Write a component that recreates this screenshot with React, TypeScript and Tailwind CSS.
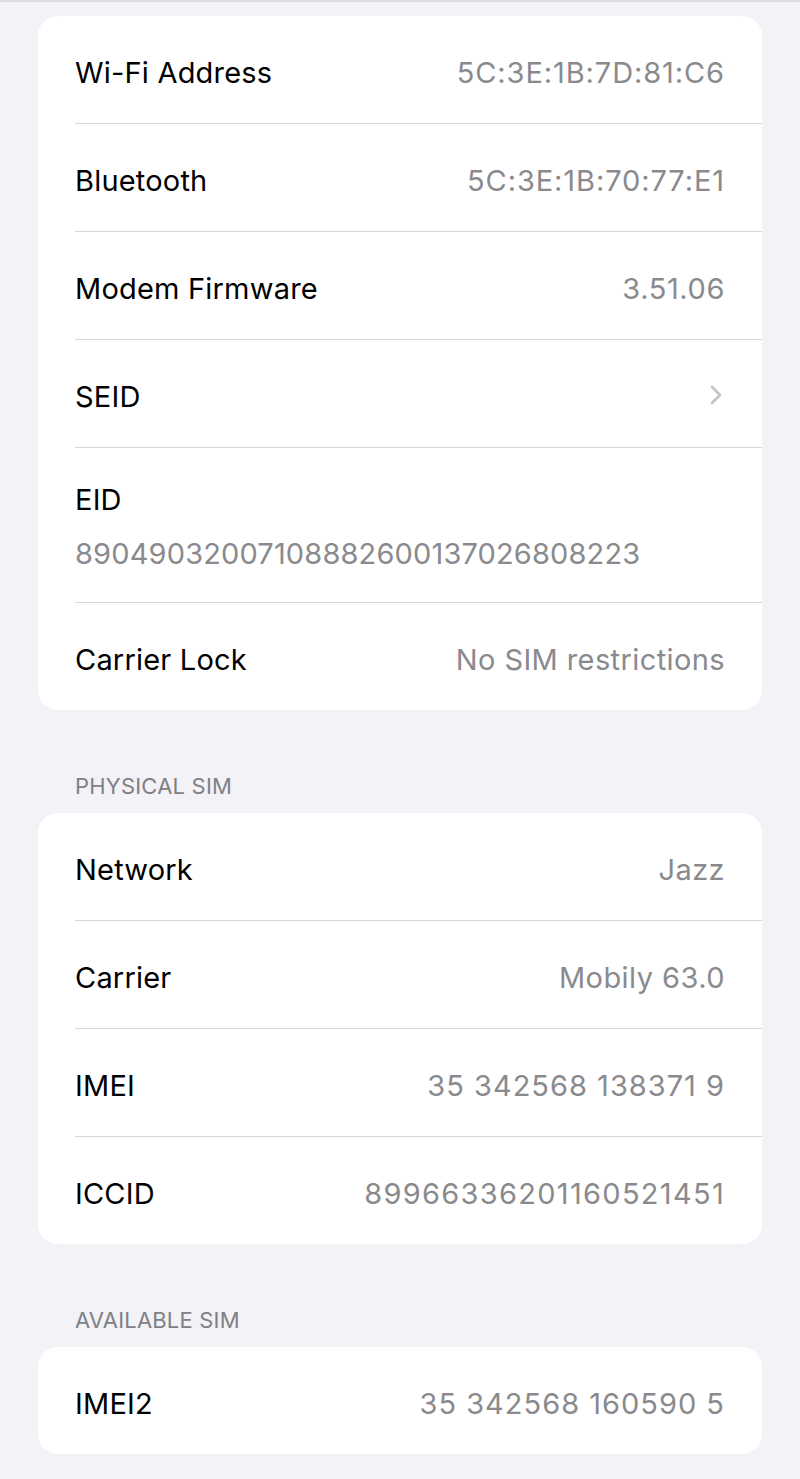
import { ChevronRight } from 'lucide-react'

type Row = {
  label: string
  value?: string
  chevron?: boolean
  stacked?: boolean
  spacing?: string
}

const general: Row[] = [
  { label: 'Wi-Fi Address', value: '5C:3E:1B:7D:81:C6', spacing: 'tracking-[0.9px]' },
  { label: 'Bluetooth', value: '5C:3E:1B:70:77:E1', spacing: 'tracking-[0.9px]' },
  { label: 'Modem Firmware', value: '3.51.06', spacing: 'tracking-[0.6px]' },
  { label: 'SEID', chevron: true },
  { label: 'EID', value: '89049032007108882600137026808223', stacked: true },
  { label: 'Carrier Lock', value: 'No SIM restrictions', spacing: 'tracking-[0.4px]' },
]

const physical: Row[] = [
  { label: 'Network', value: 'Jazz', spacing: 'tracking-[0.4px]' },
  { label: 'Carrier', value: 'Mobily 63.0', spacing: 'tracking-[0.45px]' },
  { label: 'IMEI', value: '35 342568 138371 9', spacing: 'tracking-[1px]' },
  { label: 'ICCID', value: '89966336201160521451', spacing: 'tracking-[1.3px]' },
]

const available: Row[] = [
  { label: 'IMEI2', value: '35 342568 160590 5', spacing: 'tracking-[1px]' },
]

function Card({ rows }: { rows: Row[] }) {
  return (
    <div className="mx-[38px] bg-white rounded-[20px] overflow-hidden">
      {rows.map((row, i) => (
        <div key={row.label} className="pl-[37px]">
          {row.stacked ? (
            <div className="h-[154px] pr-[38px] pt-[4px] flex flex-col justify-center gap-[22px]">
              <div className="text-[29px] leading-[32px] text-black tracking-[0.2px]">{row.label}</div>
              <div className="text-[29px] leading-[32px] text-[#8a8a8e] tracking-[0.15px]">
                {row.value}
              </div>
            </div>
          ) : (
            <div className="h-[107px] pr-[38px] pt-[6px] flex items-center justify-between">
              <span className="text-[29px] text-black tracking-[0.2px]">{row.label}</span>
              {row.chevron ? (
                <ChevronRight className="w-[32px] h-[32px] text-[#c4c4c7] -mr-[8px] -mt-[4px]" strokeWidth={2} />
              ) : (
                <span className={`text-[29px] text-[#8a8a8e] -mr-[1px] ${row.spacing}`}>{row.value}</span>
              )}
            </div>
          )}
          {i < rows.length - 1 && <div className="h-px bg-[#d7d7da]" />}
        </div>
      ))}
    </div>
  )
}

function SectionHeader({ title }: { title: string }) {
  return (
    <div className="px-[75px] pt-[63px] pb-[14px] text-[22px] leading-[26px] text-[#808085] tracking-[0.2px]">
      {title}
    </div>
  )
}

export default function App() {
  return (
    <div
      className="w-[800px] h-[1479px] bg-[#f2f2f7] border-t-2 border-[#dcdce0] pt-[14px]"
      style={{ fontFamily: 'Inter, "Noto Sans", sans-serif' }}
    >
      <Card rows={general} />
      <SectionHeader title="PHYSICAL SIM" />
      <Card rows={physical} />
      <SectionHeader title="AVAILABLE SIM" />
      <Card rows={available} />
    </div>
  )
}
